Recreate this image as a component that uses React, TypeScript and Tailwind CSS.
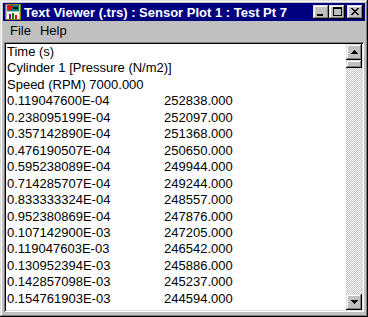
const LINES: [string, string][] = [
  ["0.119047600E-04", "252838.000"],
  ["0.238095199E-04", "252097.000"],
  ["0.357142890E-04", "251368.000"],
  ["0.476190507E-04", "250650.000"],
  ["0.595238089E-04", "249944.000"],
  ["0.714285707E-04", "249244.000"],
  ["0.833333324E-04", "248557.000"],
  ["0.952380869E-04", "247876.000"],
  ["0.107142900E-03", "247205.000"],
  ["0.119047603E-03", "246542.000"],
  ["0.130952394E-03", "245886.000"],
  ["0.142857098E-03", "245237.000"],
  ["0.154761903E-03", "244594.000"],
  ["0.166666694E-03", "243956.000"],
];

const raised =
  "bg-[#c0c0c0] shadow-[inset_-1px_-1px_#000,inset_1px_1px_#dfdfdf,inset_-2px_-2px_#808080,inset_2px_2px_#fff]";

export default function App() {
  return (
    <div
      className={`w-[368px] h-[317px] p-[3px] flex flex-col ${raised}`}
      style={{ fontFamily: '"Liberation Sans", Arial, sans-serif' }}
    >
      <TitleBar />
      <MenuBar />
      <TextArea />
    </div>
  );
}

function AppIcon() {
  return (
    <svg width="16" height="16" viewBox="0 0 16 16" shapeRendering="crispEdges">
      <rect x="0" y="0" width="16" height="16" fill="#808000" />
      <rect x="1" y="1" width="14" height="14" fill="#c0c0c0" />
      <rect x="2" y="1" width="12" height="6" fill="#008080" />
      <path d="M3 2l4 4M7 2l-4 4" stroke="#ff0000" strokeWidth="1.5" />
      <rect x="8" y="3" width="5" height="2" fill="#000" />
      <rect x="2" y="8" width="12" height="7" fill="#fff" />
      <rect x="4" y="10" width="2" height="5" fill="#800080" />
      <rect x="7" y="9" width="2" height="6" fill="#008000" />
      <rect x="10" y="11" width="2" height="4" fill="#ff0000" />
    </svg>
  );
}

function CaptionButton({ children, className = "" }: { children: React.ReactNode; className?: string }) {
  return (
    <div className={`w-[16px] h-[14px] flex items-center justify-center ${raised} ${className}`}>
      {children}
    </div>
  );
}

function TitleBar() {
  return (
    <div className="h-[18px] bg-[#000080] flex items-center pl-[2px] pr-[2px] gap-[3px]">
      <AppIcon />
      <span className="text-white font-bold text-[13px] leading-none whitespace-nowrap flex-1">
        Text Viewer (.trs) : Sensor Plot 1 : Test Pt 7
      </span>
      <div className="flex items-center">
        <CaptionButton>
          <div className="w-[6px] h-[2px] bg-black mt-[6px] -ml-[2px]" />
        </CaptionButton>
        <CaptionButton>
          <div className="w-[9px] h-[9px] border border-black border-t-2 -mt-[1px]" />
        </CaptionButton>
        <CaptionButton className="ml-[2px]">
          <svg width="8" height="7" viewBox="0 0 8 7" shapeRendering="crispEdges" className="-mt-[1px]">
            <path d="M0 0h2v1h-2zM6 0h2v1h-2zM1 1h2v1h-2zM5 1h2v1h-2zM2 2h4v1h-4zM3 3h2v1h-2zM2 4h4v1h-4zM1 5h2v1h-2zM5 5h2v1h-2zM0 6h2v1h-2zM6 6h2v1h-2z" fill="#000" />
          </svg>
        </CaptionButton>
      </div>
    </div>
  );
}

function MenuBar() {
  return (
    <div className="h-[20px] flex items-center text-[13px] text-black">
      <span className="px-[7px]">File</span>
      <span className="px-[2px]">Help</span>
    </div>
  );
}

function ScrollButton({ down }: { down?: boolean }) {
  return (
    <div className={`w-[16px] h-[16px] flex items-center justify-center ${raised}`}>
      <svg width="7" height="4" viewBox="0 0 7 4" shapeRendering="crispEdges">
        {down ? <path d="M0 0h7L3.5 4z" fill="#000" /> : <path d="M3.5 0L7 4H0z" fill="#000" />}
      </svg>
    </div>
  );
}

function TextArea() {
  return (
    <div className="flex-1 ml-[1px] mr-[1px] mt-[1px] mb-[2px] flex p-[2px] bg-white shadow-[inset_1px_1px_#808080,inset_-1px_-1px_#fff,inset_2px_2px_#000,inset_-2px_-2px_#dfdfdf] overflow-hidden">
      <div className="flex-1 overflow-hidden pl-[1px] text-[13px] leading-[16.45px] text-black">
        <div className="whitespace-nowrap">Time (s)</div>
        <div className="whitespace-nowrap">Cylinder 1 [Pressure (N/m2)]</div>
        <div className="whitespace-nowrap">Speed (RPM) 7000.000</div>
        {LINES.map(([t, v], i) => (
          <div key={i} className="flex whitespace-nowrap">
            <span className="w-[157px]">{t}</span>
            <span>{v}</span>
          </div>
        ))}
      </div>
      <div className="w-[16px] flex flex-col">
        <ScrollButton />
        <div className="flex-1 flex flex-col bg-[repeating-conic-gradient(#c0c0c0_0_25%,#fff_0_50%)] bg-[length:2px_2px]">
          <div className={`h-[8px] ${raised}`} />
        </div>
        <ScrollButton down />
      </div>
    </div>
  );
}
